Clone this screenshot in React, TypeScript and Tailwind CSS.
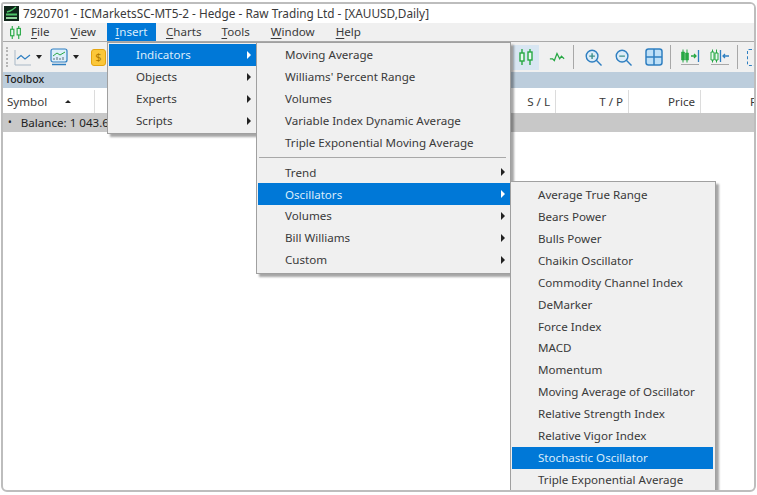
import type { ReactNode } from "react";

const FONT = "font-['Noto_Sans','Open_Sans',sans-serif]";

const INSERT_ITEMS = ["Indicators", "Objects", "Experts", "Scripts"];
const INDICATORS_TOP = ["Moving Average", "Williams' Percent Range", "Volumes", "Variable Index Dynamic Average", "Triple Exponential Moving Average"];
const INDICATORS_GROUPS = ["Trend", "Oscillators", "Volumes", "Bill Williams", "Custom"];
const OSCILLATORS = [
  "Average True Range",
  "Bears Power",
  "Bulls Power",
  "Chaikin Oscillator",
  "Commodity Channel Index",
  "DeMarker",
  "Force Index",
  "MACD",
  "Momentum",
  "Moving Average of Oscillator",
  "Relative Strength Index",
  "Relative Vigor Index",
  "Stochastic Oscillator",
  "Triple Exponential Average",
];

function MenuRow({ label, active, arrow, indent }: { label: string; active?: boolean; arrow?: boolean; indent: string }) {
  return (
    <div className={`flex h-[21.9px] items-center justify-between ${indent} pr-[5px] ${active ? "bg-[#0078d7] text-[#d9ecfb]" : "text-[#3a3a3a]"}`}>
      <span className="whitespace-nowrap">{label}</span>
      {arrow && <span className={`h-0 w-0 border-y-[4px] border-l-[4px] border-y-transparent ${active ? "border-l-white" : "border-l-[#222]"}`} />}
    </div>
  );
}

function Candles({ className = "" }: { className?: string }) {
  return (
    <svg width="16" height="16" viewBox="0 0 16 16" fill="none" stroke="#27a844" strokeWidth="1.4" className={className}>
      <path d="M4 0v4M4 12v4M12 0v3M12 11v5" />
      <rect x="2" y="4" width="4" height="8" fill="#eafaf0" />
      <rect x="10" y="3" width="4" height="8" fill="#eafaf0" />
    </svg>
  );
}

function Sep() {
  return <div className="mx-[4px] h-[24px] w-[1px] shrink-0 bg-[#a8a8a8]" />;
}

function Caret() {
  return <span className="block h-0 w-0 border-x-[3.5px] border-t-[4px] border-x-transparent border-t-[#222]" />;
}

function MenuTitle({ first, rest, x }: { first: string; rest: string; x: string }) {
  return (
    <span className={`${x} whitespace-nowrap text-[#3a3a3a]`}>
      <span className="underline underline-offset-2">{first}</span>
      {rest}
    </span>
  );
}

function Zoom({ plus }: { plus?: boolean }) {
  return (
    <svg width="17" height="17" viewBox="0 0 18 18" fill="none" stroke="#2f7fc1" strokeWidth="1.5">
      <circle cx="7.5" cy="7.5" r="6.2" fill="#dcecf8" />
      <path d="M12 12l5.5 5.5" />
      <path d={plus ? "M4.5 7.5h6M7.5 4.5v6" : "M4.5 7.5h6"} stroke="#3d8f8a" />
    </svg>
  );
}

function HeaderCell({ children, w, right }: { children?: ReactNode; w: string; right?: boolean }) {
  return (
    <div className={`flex h-full shrink-0 items-center border-r border-[#dcdcdc] ${w} ${right ? "justify-end pr-[5px]" : ""}`}>
      {children}
    </div>
  );
}

export default function App() {
  return (
    <div className={`${FONT} h-[495px] w-[757px] overflow-hidden bg-white pl-[1px] pr-[1px] pt-[2px] text-[11.6px]`}>
      <div className="relative h-[490px] overflow-hidden rounded-b-[6px] rounded-tr-[6px] rounded-tl-[3px] border-2 border-[#bdbdbd]">
        {/* title bar */}
        <div className="flex h-[19px] items-center gap-[4px] bg-white pl-[1px] text-[11.8px] text-[#3a3a3a]">
          <svg width="15" height="15" viewBox="0 0 15 15">
            <rect width="15" height="15" fill="#10241a" />
            <path d="M3 6l3-1 2-1 4-3" stroke="#4fc46a" strokeWidth="1.4" fill="none" />
            <rect x="2" y="7.5" width="11" height="2" fill="#4fc46a" />
            <rect x="2" y="11" width="11" height="2" fill="#8fd39a" />
          </svg>
          <span className="whitespace-nowrap">7920701 - ICMarketsSC-MT5-2 - Hedge - Raw Trading Ltd - [XAUUSD,Daily]</span>
        </div>

        {/* menu bar */}
        <div className="flex h-[19px] items-center border-b border-[#a9a9a9] bg-[#f0f0f0] pl-[6px]">
          <Candles className="h-[13px] w-[13px]" />
          <MenuTitle first="F" rest="ile" x="ml-[9px]" />
          <MenuTitle first="V" rest="iew" x="ml-[21px]" />
          <div className="ml-[11px] flex h-full w-[49px] items-center justify-center bg-[#0078d7] text-[#d9ecfb]">
            <span>
              <span className="underline underline-offset-2">I</span>nsert
            </span>
          </div>
          <MenuTitle first="C" rest="harts" x="ml-[10px]" />
          <MenuTitle first="T" rest="ools" x="ml-[20px]" />
          <MenuTitle first="W" rest="indow" x="ml-[21px]" />
          <MenuTitle first="H" rest="elp" x="ml-[21px]" />
        </div>

        {/* toolbar */}
        <div className="flex h-[30px] items-center bg-[#f0f0f0] pl-[3px]">
          <div className="h-[20px] w-[2px] shrink-0 border-l-2 border-dotted border-[#b5b5b5]" />
          <svg width="18" height="17" viewBox="0 0 18 17" fill="none" className="ml-[6px] shrink-0">
            <path d="M1 1v15h16" stroke="#a9b8c6" />
            <path d="M3 10l4-3.5 4 3.5 5-4" stroke="#2f7fc1" strokeWidth="1.2" />
          </svg>
          <div className="ml-[4px]"><Caret /></div>
          <svg width="18" height="18" viewBox="0 0 18 18" fill="none" className="ml-[8px] shrink-0">
            <rect x="1" y="1" width="16" height="13" rx="2" fill="#dceefa" stroke="#2f7fc1" strokeWidth="1.2" />
            <path d="M3 8l4-3 3 2 5-3" stroke="#27a844" />
            <path d="M4 12v-2M7 12v-3M10 12v-2M13 12v-3" stroke="#5a6b78" />
            <path d="M2 16.5h14" stroke="#2f7fc1" strokeWidth="1.4" />
          </svg>
          <div className="ml-[5px]"><Caret /></div>
          <div className="ml-[12px] flex h-[17px] w-[15px] shrink-0 items-center justify-center rounded-[3px] border border-[#e5a510] bg-[#fbc73a] text-[11px] text-[#b07a00]">$</div>
          <div className="ml-[407px] flex h-[25px] w-[26px] shrink-0 items-center justify-center bg-[#d8e6f2]">
            <Candles />
          </div>
          <svg width="16" height="14" viewBox="0 0 18 14" fill="none" stroke="#27a844" strokeWidth="1.4" className="ml-[10px] shrink-0">
            <path d="M1 9h3l2 2 3-8 3 6 2-3 3 3" />
          </svg>
          <div className="ml-[4px]"><Sep /></div>
          <div className="ml-[7px]"><Zoom plus /></div>
          <div className="ml-[13px]"><Zoom /></div>
          <svg width="18" height="18" viewBox="0 0 18 18" fill="#bfe0f7" stroke="#2f7fc1" strokeWidth="1.5" className="ml-[13px] shrink-0">
            <rect x="1" y="1" width="16" height="16" rx="2.5" />
            <path d="M9 1v16M1 9h16" />
          </svg>
          <div className="ml-[3px]"><Sep /></div>
          <svg width="20" height="16" viewBox="0 0 20 16" fill="none" className="ml-[5px] shrink-0">
            <path d="M3 0.5v13M7 0.5v13" stroke="#27a844" />
            <path d="M1.5 3h3v8h-3zM5.5 4h3v7h-3z" fill="#27a844" stroke="#27a844" strokeWidth="0.6" />
            <path d="M11 7h5M14 5l2 2-2 2" stroke="#27a844" strokeWidth="1.3" />
            <path d="M18.5 1v12" stroke="#2f7fc1" strokeWidth="1.3" />
            <path d="M1 15.5h18" stroke="#a8a8a8" />
          </svg>
          <svg width="20" height="16" viewBox="0 0 20 16" fill="none" className="ml-[10px] shrink-0">
            <path d="M2.5 0.5v13M6.5 0.5v13" stroke="#27a844" />
            <path d="M1 3h3v8H1zM5 4h3v7H5z" fill="#eafaf0" stroke="#27a844" />
            <path d="M10.5 1v12" stroke="#2f7fc1" strokeWidth="1.3" />
            <path d="M13 7h6M15 5l-2 2 2 2" stroke="#2f7fc1" strokeWidth="1.3" />
            <path d="M1 15.5h18" stroke="#a8a8a8" />
          </svg>
          <div className="ml-[3px]"><Sep /></div>
          <div className="ml-[5px] h-[17px] w-[8px] shrink-0 rounded-l-[2px] border-y border-l border-dashed border-[#2f7fc1]" />
        </div>

        {/* toolbox */}
        <div className="flex h-[16px] items-center bg-[#bccddc] pl-[2px] text-[10.5px] font-medium text-[#222]">Toolbox</div>
        <div className="flex h-[25px] items-center border-t border-white pt-[1px] text-[#3a3a3a]">
          <HeaderCell w="w-[92px]">
            <span className="ml-[4px]">Symbol</span>
            <span className="ml-[18px] h-0 w-0 border-x-[3px] border-b-[3px] border-x-transparent border-b-[#222]" />
          </HeaderCell>
          <HeaderCell w="w-[461px]" right>S / L</HeaderCell>
          <HeaderCell w="w-[73px]" right>T / P</HeaderCell>
          <HeaderCell w="w-[72px]" right>Price</HeaderCell>
          <div className="flex-1 pl-[49px]">P</div>
        </div>
        <div className="flex h-[19px] items-center bg-[#c8c8c8] pl-[5px] text-[#222]">
          <span className="mr-[9px] text-[10px]">•</span>
          <span className="whitespace-nowrap">Balance: 1 043.66</span>
        </div>

        {/* insert menu */}
        <div className="absolute left-[104px] top-[38px] h-[92px] w-[150px] border border-[#a0a0a0] bg-[#f0f0f0] py-[1px] pl-[1px] shadow-[3px_3px_2px_rgba(0,0,0,0.35)]">
          {INSERT_ITEMS.map((item, i) => (
            <MenuRow key={item} label={item} active={i === 0} arrow indent="pl-[27px]" />
          ))}
        </div>

        {/* indicators submenu */}
        <div className="absolute left-[253px] top-[38px] h-[232px] w-[255px] border border-[#a0a0a0] bg-[#f0f0f0] py-[1px] pl-[1px] shadow-[3px_3px_2px_rgba(0,0,0,0.35)]">
          {INDICATORS_TOP.map((item) => (
            <MenuRow key={item} label={item} indent="pl-[27px]" />
          ))}
          <div className="mx-[1px] my-[3.5px] mr-[4px] h-[1px] bg-[#a8a8a8]" />
          {INDICATORS_GROUPS.map((item) => (
            <MenuRow key={item} label={item} active={item === "Oscillators"} arrow indent="pl-[27px]" />
          ))}
        </div>

        {/* oscillators submenu */}
        <div className="absolute left-[507px] top-[177px] h-[320px] w-[206px] border border-[#a0a0a0] bg-[#f0f0f0] pb-[1px] pl-[1px] pr-[2px] pt-[2px] shadow-[3px_3px_2px_rgba(0,0,0,0.35)]">
          {OSCILLATORS.map((item) => (
            <MenuRow key={item} label={item} active={item === "Stochastic Oscillator"} indent="pl-[26px]" />
          ))}
        </div>
      </div>
    </div>
  );
}
